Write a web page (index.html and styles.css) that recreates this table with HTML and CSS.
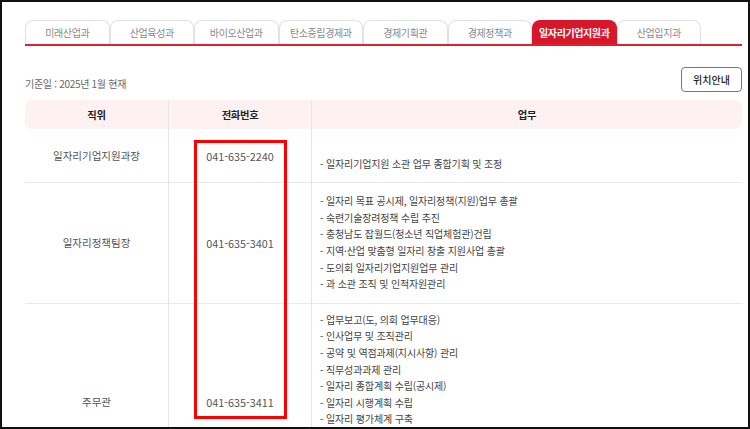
FILE: index.html
```html
<!DOCTYPE html>
<html lang="ko">
<head>
<meta charset="utf-8">
<link rel="stylesheet" href="styles.css">
</head>
<body>
<div class="frame">
  <ul class="tabs">
    <li class="tab">미래산업과</li>
    <li class="tab">산업육성과</li>
    <li class="tab">바이오산업과</li>
    <li class="tab">탄소중립경제과</li>
    <li class="tab">경제기획관</li>
    <li class="tab">경제정책과</li>
    <li class="tab active">일자리기업지원과</li>
    <li class="tab">산업입지과</li>
  </ul>
  <div class="info">
    <span class="date">기준일 : 2025년 1월 현재</span>
    <button class="loc-btn">위치안내</button>
  </div>
  <table class="staff">
    <colgroup>
      <col class="c1"><col class="c2"><col class="c3">
    </colgroup>
    <thead>
      <tr><th>직위</th><th>전화번호</th><th>업무</th></tr>
    </thead>
    <tbody>
      <tr>
        <td class="pos">일자리기업지원과장</td>
        <td class="tel">041-635-2240</td>
        <td class="work"><ul class="duties lead"><li>- 일자리기업지원 소관 업무 종합기획 및 조정</li></ul></td>
      </tr>
      <tr>
        <td class="pos">일자리정책팀장</td>
        <td class="tel">041-635-3401</td>
        <td class="work"><ul class="duties">
          <li>- 일자리 목표 공시제, 일자리정책(지원)업무 총괄</li>
          <li>- 숙련기술장려정책 수립 추진</li>
          <li>- 충청남도 잡월드(청소년 직업체험관)건립</li>
          <li>- 지역·산업 맞춤형 일자리 창출 지원사업 총괄</li>
          <li>- 도의회 일자리기업지원업무 관리</li>
          <li>- 과 소관 조직 및 인적자원관리</li>
        </ul></td>
      </tr>
      <tr>
        <td class="pos">주무관</td>
        <td class="tel">041-635-3411</td>
        <td class="work tall"><ul class="duties">
          <li>- 업무보고(도, 의회 업무대응)</li>
          <li>- 인사업무 및 조직관리</li>
          <li>- 공약 및 역점과제(지시사항) 관리</li>
          <li>- 직무성과과제 관리</li>
          <li>- 일자리 종합계획 수립(공시제)</li>
          <li>- 일자리 시행계획 수립</li>
          <li>- 일자리 평가체계 구축</li>
        </ul></td>
      </tr>
    </tbody>
  </table>
  <div class="highlight"></div>
</div>
</body>
</html>
```

FILE: styles.css
```css
* { box-sizing: border-box; }
html, body { margin: 0; padding: 0; background: #fff; }
body {
  font-family: "Noto Sans CJK KR", "Noto Sans", sans-serif;
  color: #444;
}
.frame {
  position: relative;
  width: 750px;
  height: 429px;
  border: 2px solid #111;
  overflow: hidden;
  padding: 18px 6px 0 23px;
}
.tabs {
  list-style: none;
  margin: 0;
  padding: 0;
  display: flex;
  border-bottom: 2px solid #d9232f;
  height: 26px;
}
.tab {
  width: 84.5px;
  height: 24px;
  border: 1px solid #e2e2e2;
  border-bottom: none;
  border-radius: 8px 8px 0 0;
  font-size: 10px;
  letter-spacing: -0.4px;
  color: #8a8a8a;
  text-align: center;
  line-height: 23px;
}
.tab.active {
  background: #d7182a;
  border-color: #d7182a;
  color: #fff;
  font-weight: 700;
}
.info {
  display: flex;
  justify-content: space-between;
  align-items: flex-end;
  margin-top: 21px;
}
.date {
  font-size: 10px;
  letter-spacing: -0.3px;
  color: #666;
  line-height: 16px;
}
.loc-btn {
  width: 61px;
  height: 25px;
  border: 1px solid #777;
  border-radius: 4px;
  background: #fff;
  font-family: inherit;
  font-size: 10px;
  font-weight: 500;
  color: #222;
  padding: 0;
}
.staff {
  margin-top: 8px;
  width: 717px;
  border-collapse: separate;
  border-spacing: 0;
  table-layout: fixed;
  font-size: 10px;
  letter-spacing: -0.3px;
}
.c1, .c2 { width: 143px; }
.staff th {
  background: #fdf1f2;
  height: 29px;
  font-weight: 700;
  color: #222;
  padding: 0;
  font-size: 10.3px;
}
.staff th:first-child { border-radius: 7px 0 0 7px; }
.staff th:last-child { border-radius: 0 7px 7px 0; }
.staff th + th, .staff td + td { border-left: 1px solid #e6e6e6; }
.staff td {
  border-bottom: 1px solid #e8e8e8;
  vertical-align: middle;
  padding: 0;
}
.pos, .tel { text-align: center; color: #555; }
.pos { font-size: 10.5px; letter-spacing: 0; }
.tel { font-size: 10.8px; letter-spacing: 0; }
.work { padding: 10px 8px !important; color: #444; letter-spacing: -0.15px; }
.work.tall { padding-bottom: 72px !important; padding-top: 8px !important; }
.duties {
  list-style: none;
  margin: 0;
  padding: 0;
  line-height: 16.6px;
}
.duties.lead { padding-top: 16.6px; }
.highlight {
  position: absolute;
  left: 192px;
  top: 138px;
  width: 93px;
  height: 279px;
  border: 3px solid #ff0000;
}
```
